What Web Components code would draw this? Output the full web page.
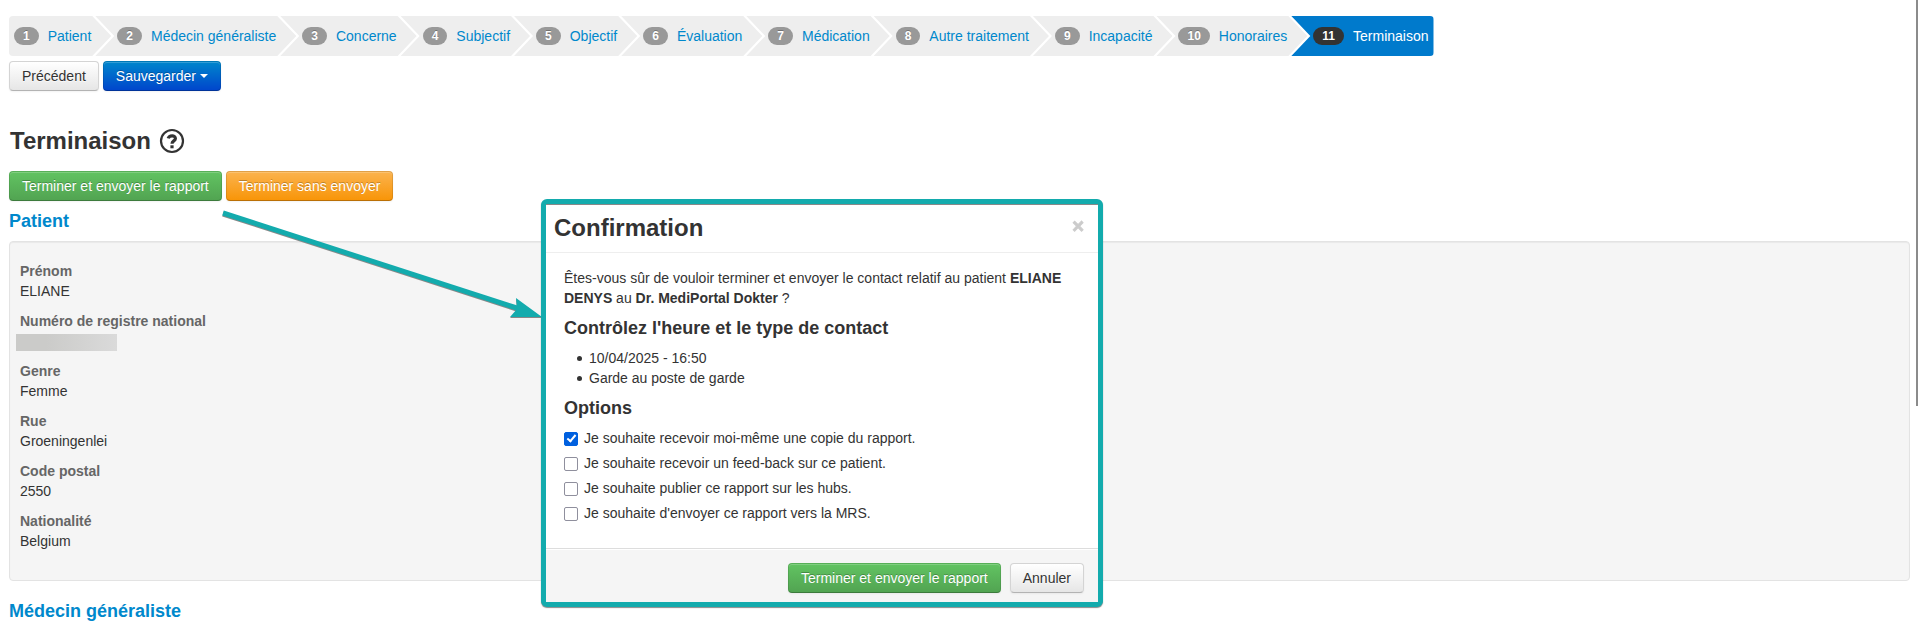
<!DOCTYPE html>
<html lang="fr">
<head>
<meta charset="utf-8">
<title>Terminaison</title>
<style>
  body {
    height: 100vh;
    margin: 0;
    background: #fff;
    color: #333;
    font: 14px/20px "Liberation Sans", Arial, sans-serif;
    overflow: hidden;
  }
</style>
</head>
<body>
<contact-page></contact-page>

<template id="wizard-step">
  <style>
    :host {
      --point: 19px;
      display: flex;
      align-items: center;
      height: 40px;
      margin-left: -16px;
      padding: 0 20px 0 22px;
      background: #eee;
      white-space: nowrap;
      clip-path: polygon(0 0, calc(100% - var(--point)) 0, 100% 50%, calc(100% - var(--point)) 100%, 0 100%, var(--point) 50%);
    }
    :host(:first-child) {
      margin-left: 0;
      padding-left: 5px;
      border-radius: 4px 0 0 4px;
      clip-path: polygon(0 0, calc(100% - var(--point)) 0, 100% 50%, calc(100% - var(--point)) 100%, 0 100%);
    }
    :host([active]) {
      padding-right: 5px;
      background: #007acc;
      border-radius: 0 4px 4px 0;
      clip-path: polygon(0 0, 100% 0, 100% 100%, 0 100%, var(--point) 50%);
    }
    a {
      display: flex;
      align-items: center;
      gap: 9px;
      color: #08c;
      text-decoration: none;
    }
    .badge {
      padding: 2px 9px;
      border-radius: 9px;
      background: #999;
      color: #fff;
      font-size: 12px;
      font-weight: bold;
      line-height: 14px;
      text-shadow: 0 -1px 0 rgba(0, 0, 0, 0.25);
    }
    :host([active]) a { color: #fff; }
    :host([active]) .badge { background: #333; }
  </style>
  <a href="#"><span class="badge"></span><slot></slot></a>
</template>

<template id="action-button">
  <style>
    :host { display: block; }
    button {
      display: flex;
      align-items: center;
      gap: 4px;
      padding: 4px 12px;
      border: 1px solid #ccc;
      border-color: #d4d4d4 #d4d4d4 #b3b3b3;
      border-radius: 4px;
      background: linear-gradient(#fff, #e6e6e6);
      box-shadow: inset 0 1px 0 rgba(255, 255, 255, 0.2), 0 1px 2px rgba(0, 0, 0, 0.05);
      color: #333;
      font: inherit;
      text-shadow: 0 1px 1px rgba(255, 255, 255, 0.75);
      white-space: nowrap;
      cursor: pointer;
    }
    :host([kind]) button {
      border-color: rgba(0, 0, 0, 0.1) rgba(0, 0, 0, 0.1) rgba(0, 0, 0, 0.25);
      background-origin: border-box;
      color: #fff;
      text-shadow: 0 -1px 0 rgba(0, 0, 0, 0.25);
    }
    :host([kind=primary]) button { background-image: linear-gradient(#08c, #04c); }
    :host([kind=success]) button { background-image: linear-gradient(#62c462, #51a351); }
    :host([kind=warning]) button { background-image: linear-gradient(#fbb450, #f89406); }
    .caret { display: none; }
    :host([caret]) .caret {
      display: block;
      border-top: 4px solid #fff;
      border-left: 4px solid transparent;
      border-right: 4px solid transparent;
    }
  </style>
  <button type="button"><slot></slot><span class="caret"></span></button>
</template>

<template id="page-section">
  <style>
    :host { display: block; }
    h4 {
      margin: 10px 0;
      color: #08c;
      font-size: 18px;
      line-height: 20px;
    }
    .well {
      display: flex;
      flex-direction: column;
      align-items: flex-start;
      gap: 10px;
      margin-bottom: 20px;
      padding: 19px 10px 29px;
      border: 1px solid #e3e3e3;
      border-radius: 4px;
      background: #f5f5f5;
      box-shadow: inset 0 1px 1px rgba(0, 0, 0, 0.05);
    }
  </style>
  <h4></h4>
  <div class="well"><slot></slot></div>
</template>

<template id="data-field">
  <style>
    :host { display: block; }
    dl, dd { margin: 0; }
    dt { color: #666; font-weight: bold; }
    dd { height: 20px; }
    .masked {
      display: none;
      width: 101px;
      height: 17px;
      margin-left: -4px;
      background: linear-gradient(90deg, #cbcbc9 30%, #dadada);
    }
    :host([masked]) dd { display: flex; align-items: flex-end; }
    :host([masked]) .masked { display: block; }
  </style>
  <dl>
    <dt></dt>
    <dd><slot></slot><span class="masked"></span></dd>
  </dl>
</template>

<template id="option-check">
  <style>
    :host { display: block; }
    label { display: flex; align-items: center; gap: 6px; }
    input {
      appearance: none;
      box-sizing: border-box;
      display: grid;
      place-items: center;
      width: 14px;
      height: 14px;
      margin: 1px 0 0;
      border: 1px solid #8f8f9d;
      border-radius: 2px;
      background: #fff;
    }
    input:checked { border-color: #0060df; background: #0060df; }
    input:checked::before {
      content: "";
      width: 3px;
      height: 7px;
      margin-bottom: 2px;
      border: solid #fff;
      border-width: 0 2px 2px 0;
      transform: rotate(40deg);
    }
  </style>
  <label><input type="checkbox"><span><slot></slot></span></label>
</template>

<template id="confirm-dialog">
  <style>
    :host {
      display: block;
      box-sizing: border-box;
      border: 5px solid #13abad;
      border-radius: 6px;
      background: #fff;
      box-shadow: 0 1px 1px rgba(60, 60, 60, 0.6);
    }
    header {
      display: flex;
      align-items: center;
      justify-content: space-between;
      padding: 9px 14px 9px 8px;
      border-bottom: 1px solid #eee;
      box-shadow: inset 0 1px 0 #888;
    }
    h3 { margin: 0; font-size: 24px; line-height: 30px; }
    .close {
      padding: 0 0 4px;
      border: 0;
      background: none;
      color: #000;
      font: bold 20px/20px "Liberation Sans", Arial, sans-serif;
      -webkit-text-stroke: 1px #000;
      opacity: 0.2;
      cursor: pointer;
    }
    .body { padding: 15px 17px 25px 18px; }
    footer {
      display: flex;
      justify-content: flex-end;
      gap: 9px;
      padding: 14px 14px 9px;
      border-top: 1px solid #ddd;
      background: #f5f5f5;
      box-shadow: inset 0 1px 0 #fff;
    }
  </style>
  <header>
    <h3></h3>
    <button class="close" type="button" aria-label="Fermer">×</button>
  </header>
  <div class="body"><slot></slot></div>
  <footer><slot name="actions"></slot></footer>
</template>

<template id="callout-arrow">
  <style>
    :host { display: block; }
    svg {
      display: block;
      overflow: visible;
      filter: drop-shadow(0 1px 0 #888);
    }
  </style>
  <svg width="320" height="108" viewBox="0 0 320 108" aria-hidden="true">
    <path d="M1 3 L298 99" stroke="#13abad" stroke-width="5" fill="none"/>
    <path d="M294 88 L320 107 L288 107 L295 99 Z" fill="#13abad"/>
  </svg>
</template>

<template id="contact-page">
  <style>
    :host { display: block; padding: 16px 8px 0 9px; }
    nav { display: flex; }
    .toolbar { display: flex; gap: 4px; margin-top: 5px; }
    h3 {
      display: flex;
      align-items: center;
      gap: 8px;
      margin: 30px 0 10px;
      padding-left: 1px;
      font-size: 24px;
      line-height: 40px;
    }
    h3 + .toolbar { margin-top: 0; }
    .dialog h4 { margin: 10px 0; font-size: 18px; line-height: 20px; }
    .dialog p { margin: 0; }
    .dialog ul { margin: 0 0 10px 13px; padding: 0; list-style: none; }
    .dialog li { display: flex; align-items: center; gap: 7px; }
    .dialog li::before {
      content: "";
      width: 5px;
      height: 5px;
      border-radius: 50%;
      background: #333;
    }
    .options { display: flex; flex-direction: column; gap: 5px; }
    .dialog { position: absolute; top: 199px; left: 541px; width: 562px; }
    .arrow { position: absolute; top: 210px; left: 222px; }
    .scroll-thumb {
      position: absolute;
      top: 0;
      right: 0;
      width: 2px;
      height: 65vh;
      background: #8b8b8b;
    }
  </style>

  <nav>
    <wizard-step number="1">Patient</wizard-step>
    <wizard-step number="2">Médecin généraliste</wizard-step>
    <wizard-step number="3">Concerne</wizard-step>
    <wizard-step number="4">Subjectif</wizard-step>
    <wizard-step number="5">Objectif</wizard-step>
    <wizard-step number="6">Évaluation</wizard-step>
    <wizard-step number="7">Médication</wizard-step>
    <wizard-step number="8">Autre traitement</wizard-step>
    <wizard-step number="9">Incapacité</wizard-step>
    <wizard-step number="10">Honoraires</wizard-step>
    <wizard-step number="11" active>Terminaison</wizard-step>
  </nav>
  <div class="toolbar">
    <action-button>Précédent</action-button>
    <action-button kind="primary" caret>Sauvegarder</action-button>
  </div>

  <h3>
    Terminaison
    <svg width="26" height="26" viewBox="0 0 26 26" fill="none" stroke="#333" aria-hidden="true">
      <circle cx="13" cy="13" r="11" stroke-width="2.2"/>
      <path d="M9.2 10.4 C10.2 7 16.4 6.8 16.4 10.5 C16.4 13 13 12.8 13 15.8" stroke-width="3.2"/>
      <path d="M11.4 18.8 H14.6" stroke-width="3"/>
    </svg>
  </h3>
  <div class="toolbar">
    <action-button kind="success">Terminer et envoyer le rapport</action-button>
    <action-button kind="warning">Terminer sans envoyer</action-button>
  </div>

  <page-section heading="Patient">
    <data-field label="Prénom">ELIANE</data-field>
    <data-field label="Numéro de registre national" masked></data-field>
    <data-field label="Genre">Femme</data-field>
    <data-field label="Rue">Groeningenlei</data-field>
    <data-field label="Code postal">2550</data-field>
    <data-field label="Nationalité">Belgium</data-field>
  </page-section>
  <page-section heading="Médecin généraliste"></page-section>

  <callout-arrow class="arrow"></callout-arrow>

  <confirm-dialog class="dialog" heading="Confirmation">
    <p>Êtes-vous sûr de vouloir terminer et envoyer le contact relatif au patient <b>ELIANE DENYS</b> au <b>Dr. MediPortal Dokter</b> ?</p>
    <h4>Contrôlez l'heure et le type de contact</h4>
    <ul>
      <li>10/04/2025 - 16:50</li>
      <li>Garde au poste de garde</li>
    </ul>
    <h4>Options</h4>
    <div class="options">
      <option-check checked>Je souhaite recevoir moi-même une copie du rapport.</option-check>
      <option-check>Je souhaite recevoir un feed-back sur ce patient.</option-check>
      <option-check>Je souhaite publier ce rapport sur les hubs.</option-check>
      <option-check>Je souhaite d'envoyer ce rapport vers la MRS.</option-check>
    </div>
    <action-button slot="actions" kind="success">Terminer et envoyer le rapport</action-button>
    <action-button slot="actions">Annuler</action-button>
  </confirm-dialog>

  <div class="scroll-thumb"></div>
</template>

<script>
  // Stamps the template that has the same id as the tag
  class TemplateElement extends HTMLElement {
    constructor() {
      super();
      const markup = document.querySelector('template#' + this.localName);
      this.attachShadow({mode: 'open'});
      this.shadowRoot.appendChild(markup.content.cloneNode(true));
    }

    fill(selector, attribute) {
      this.shadowRoot.querySelector(selector).textContent = this.getAttribute(attribute);
    }
  }

  class WizardStep extends TemplateElement {
    connectedCallback() {
      this.fill('.badge', 'number');
      if(this.hasAttribute('active')) {
        this.shadowRoot.querySelector('a').setAttribute('aria-current', 'step');
      }
    }
  }

  class ActionButton extends TemplateElement {}

  class PageSection extends TemplateElement {
    connectedCallback() {
      this.fill('h4', 'heading');
      // No box for a section without fields
      if(!this.children.length) {
        this.shadowRoot.querySelector('.well').remove();
      }
    }
  }

  class DataField extends TemplateElement {
    connectedCallback() {
      this.fill('dt', 'label');
    }
  }

  class OptionCheck extends TemplateElement {
    connectedCallback() {
      this.shadowRoot.querySelector('input').checked = this.hasAttribute('checked');
    }
  }

  class ConfirmDialog extends TemplateElement {
    connectedCallback() {
      this.fill('h3', 'heading');
      this.setAttribute('role', 'dialog');
      this.setAttribute('aria-label', this.getAttribute('heading'));
      this.shadowRoot.querySelector('.close').addEventListener('click', () => this.remove());
    }
  }

  class CalloutArrow extends TemplateElement {}

  class ContactPage extends TemplateElement {}

  window.customElements.define('wizard-step', WizardStep);
  window.customElements.define('action-button', ActionButton);
  window.customElements.define('page-section', PageSection);
  window.customElements.define('data-field', DataField);
  window.customElements.define('option-check', OptionCheck);
  window.customElements.define('confirm-dialog', ConfirmDialog);
  window.customElements.define('callout-arrow', CalloutArrow);
  window.customElements.define('contact-page', ContactPage);
</script>
</body>
</html>
